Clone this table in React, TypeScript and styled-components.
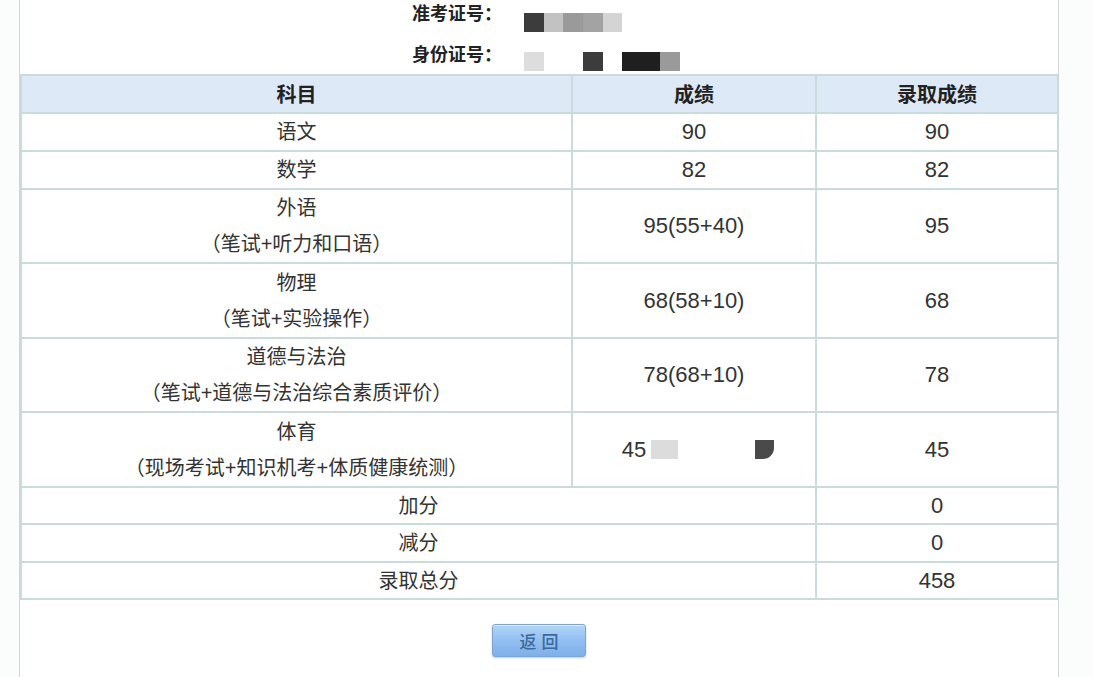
import React from "react";
import styled, { createGlobalStyle } from "styled-components";

const Global = createGlobalStyle`
  html, body { margin: 0; padding: 0; background: #fbfcfc; }
  body { font-family: "Liberation Sans", "Noto Sans CJK SC", sans-serif; color: #333; overflow: hidden; }
`;

const Page = styled.div`
  width: 1093px;
  height: 677px;
  overflow: hidden;
  display: flex;
  padding-left: 19px;
  box-sizing: border-box;
`;

const Panel = styled.div`
  width: 1040px;
  height: 677px;
  box-sizing: border-box;
  background: #ffffff;
  border-left: 1px solid #d3d6d6;
  border-right: 1px solid #d3d6d6;
  display: flex;
  flex-direction: column;
`;

const Info = styled.div`
  display: flex;
  flex-direction: column;
  gap: 10px;
  padding-left: 392px;
  padding-top: 1px;
  height: 74px;
  box-sizing: border-box;
`;

const InfoRow = styled.div<{ $h: number }>`
  height: ${(p) => p.$h}px;
  display: flex;
  align-items: center;
  gap: 22px;
`;

const Label = styled.span`
  font-family: "Noto Sans CJK SC", sans-serif;
  font-weight: 700;
  font-size: 18px;
  line-height: 22px;
  color: #222;
  width: 90px;
  white-space: nowrap;
`;

const Masked = styled.div<{ $offset: number }>`
  display: flex;
  margin-top: ${(p) => p.$offset}px;
`;

const Pix = styled.span<{ $w: number; $c: string }>`
  display: block;
  width: ${(p) => p.$w}px;
  height: 19px;
  background: ${(p) => p.$c};
`;

const Table = styled.table`
  width: 1037px;
  border-collapse: collapse;
  table-layout: fixed;
`;

const HeadCell = styled.th`
  background: #dde9f6;
  border: 2px solid #c9dcdb;
  font-family: "Noto Sans CJK SC", sans-serif;
  font-weight: 700;
  font-size: 20px;
  line-height: 30px;
  color: #222;
  padding: 0;
`;

const Row = styled.tr<{ $h: number }>`
  height: ${(p) => p.$h}px;
`;

const Cell = styled.td<{ $num?: boolean }>`
  border: 2px solid #c9dcdb;
  text-align: center;
  font-size: ${(p) => (p.$num ? 22 : 20)}px;
  color: #333;
  padding: 0;
  line-height: 30px;
`;

const Lines = styled.div`
  display: flex;
  flex-direction: column;
  align-items: center;
  line-height: 36px;
`;

const MaskedScore = styled.div`
  display: flex;
  align-items: center;
  justify-content: center;
  padding-left: 8px;
`;

const Grey = styled.span`
  display: block;
  width: 27px;
  height: 19px;
  margin-left: 5px;
  background: #dcdcdc;
`;

const Dark = styled.span`
  display: block;
  width: 19px;
  height: 19px;
  margin-left: 77px;
  background: #4a4a4a;
  border-bottom-right-radius: 11px;
`;

const Footer = styled.div`
  display: flex;
  justify-content: center;
  padding-top: 24px;
`;

const BackButton = styled.button`
  width: 94px;
  height: 33px;
  border: 1px solid #7fa4cf;
  border-radius: 3px;
  background: linear-gradient(#b2d4f8, #8fbdf0 55%, #7fb0ea);
  box-shadow: 0 1px 2px rgba(80, 110, 150, 0.35), inset 0 1px 0 rgba(255, 255, 255, 0.6);
  color: #3d6a9c;
  font-family: "Noto Sans CJK SC", sans-serif;
  font-size: 17px;
  font-weight: 500;
  letter-spacing: 5px;
  padding: 0 0 0 5px;
`;

type Subject = { name: string; note?: string; score: React.ReactNode; final: string; h: number };

const subjects: Subject[] = [
  { name: "语文", score: "90", final: "90", h: 38 },
  { name: "数学", score: "82", final: "82", h: 36 },
  { name: "外语", note: "（笔试+听力和口语）", score: "95(55+40)", final: "95", h: 74 },
  { name: "物理", note: "（笔试+实验操作）", score: "68(58+10)", final: "68", h: 75 },
  { name: "道德与法治", note: "（笔试+道德与法治综合素质评价）", score: "78(68+10)", final: "78", h: 74 },
  {
    name: "体育",
    note: "（现场考试+知识机考+体质健康统测）",
    score: (
      <MaskedScore>
        45
        <Grey />
        <Dark />
      </MaskedScore>
    ),
    final: "45",
    h: 75,
  },
];

const totals = [
  { name: "加分", value: "0", h: 37 },
  { name: "减分", value: "0", h: 38 },
  { name: "录取总分", value: "458", h: 37 },
];

export default function App() {
  return (
    <>
      <Global />
      <Page>
        <Panel>
          <Info>
            <InfoRow $h={21}>
              <Label>准考证号：</Label>
              <Masked $offset={22}>
                <Pix $w={20} $c="#3c3c3c" />
                <Pix $w={19} $c="#c2c2c2" />
                <Pix $w={20} $c="#9a9a9a" />
                <Pix $w={20} $c="#a3a3a3" />
                <Pix $w={19} $c="#d4d4d4" />
              </Masked>
            </InfoRow>
            <InfoRow $h={42}>
              <Label>身份证号：</Label>
              <Masked $offset={16}>
                <Pix $w={20} $c="#dddddd" />
                <Pix $w={39} $c="#ffffff" />
                <Pix $w={20} $c="#3c3c3c" />
                <Pix $w={19} $c="#ffffff" />
                <Pix $w={38} $c="#1f1f1f" />
                <Pix $w={20} $c="#9a9a9a" />
              </Masked>
            </InfoRow>
          </Info>
          <Table>
            <colgroup>
              <col style={{ width: 551 }} />
              <col style={{ width: 244 }} />
              <col style={{ width: 242 }} />
            </colgroup>
            <thead>
              <Row $h={38}>
                <HeadCell>科目</HeadCell>
                <HeadCell>成绩</HeadCell>
                <HeadCell>录取成绩</HeadCell>
              </Row>
            </thead>
            <tbody>
              {subjects.map((s) => (
                <Row key={s.name} $h={s.h}>
                  <Cell>
                    <Lines>
                      <span>{s.name}</span>
                      {s.note && <span>{s.note}</span>}
                    </Lines>
                  </Cell>
                  <Cell $num>{s.score}</Cell>
                  <Cell $num>{s.final}</Cell>
                </Row>
              ))}
              {totals.map((t) => (
                <Row key={t.name} $h={t.h}>
                  <Cell colSpan={2}>{t.name}</Cell>
                  <Cell $num>{t.value}</Cell>
                </Row>
              ))}
            </tbody>
          </Table>
          <Footer>
            <BackButton>返回</BackButton>
          </Footer>
        </Panel>
      </Page>
    </>
  );
}
